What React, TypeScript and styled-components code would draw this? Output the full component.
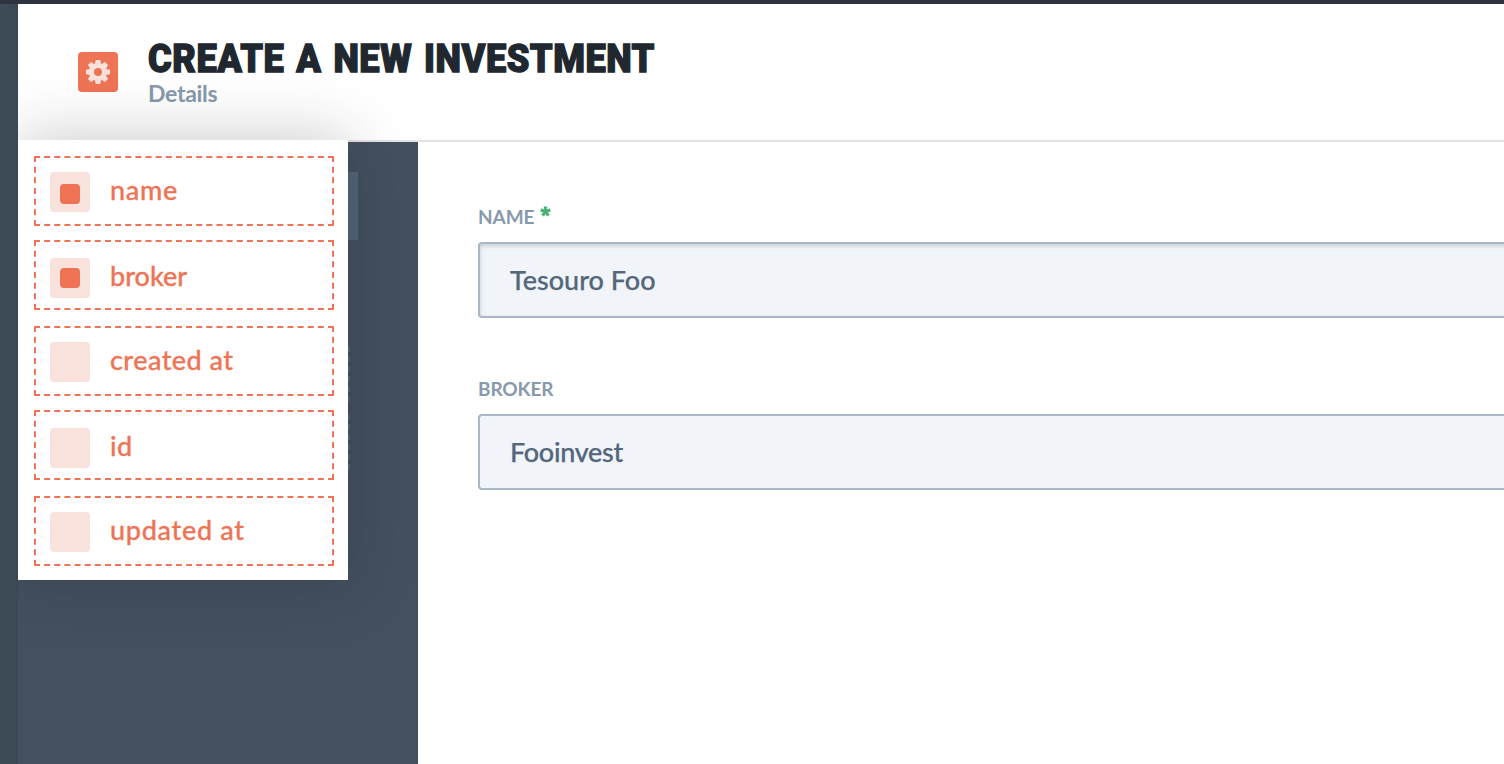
import React from 'react';
import styled, { createGlobalStyle } from 'styled-components';

const Global = createGlobalStyle`
  * { box-sizing: border-box; }
  body { margin: 0; overflow: hidden; font-family: Lato, sans-serif; -webkit-font-smoothing: antialiased; }
`;

const Page = styled.div`
  width: 100%;
  height: 100vh;
  padding: 4px 0 0 18px;
  overflow: hidden;
  background: linear-gradient(90deg, #3d4b59 0, #3d4854 18px);
  box-shadow: inset 0 4px 0 #2d3440;
`;

const Modal = styled.div`
  position: relative;
  height: 100%;
  display: flex;
  flex-direction: column;
  background: #fff;
  overflow: hidden;
`;

const Header = styled.header`
  flex: none;
  height: 138px;
  display: flex;
  align-items: flex-start;
  gap: 30px;
  padding: 36px 60px 0;
  border-bottom: 2px solid #e4e4e4;
`;

const IconTile = styled.div`
  width: 40px;
  height: 40px;
  margin-top: 12px;
  border-radius: 4px;
  background: #ee7455;
  display: flex;
  align-items: center;
  justify-content: center;
`;

const Titles = styled.div`
  display: flex;
  flex-direction: column;
`;

const Title = styled.h1`
  margin: 0;
  height: 38px;
  font: 900 38.5px/38px Roboto, sans-serif;
  letter-spacing: 0.55px;
  word-spacing: 2.6px;
  -webkit-text-stroke: 1.3px #20272f;
  stroke-linejoin: round;
  color: #20272f;
  white-space: nowrap;
  transform: scaleX(0.94);
  transform-origin: left;
`;

const Subtitle = styled.div`
  font-size: 23px;
  font-weight: 700;
  line-height: 31px;
  letter-spacing: -0.3px;
  color: #8799ac;
`;

const Body = styled.div`
  flex: 1;
  display: flex;
  min-height: 0;
`;

const Sidebar = styled.aside`
  flex: none;
  width: 400px;
  padding: 30px 60px 0 60px;
  background: #44505f;
`;

const ActiveItem = styled.div`
  height: 68px;
  background: #536477;
`;

const DropZone = styled.div<{ $top: number }>`
  height: 56px;
  width: 272px;
  margin-top: ${(p) => p.$top}px;
  border: 2px dashed #4f6277;
`;

const Form = styled.main`
  flex: none;
  width: 1200px;
  padding: 60px 0 0 60px;
`;

const Field = styled.div`
  height: 172px;
`;

const Label = styled.label`
  display: flex;
  height: 40px;
  gap: 6px;
  line-height: 29px;
  font-size: 19px;
  font-weight: 700;
  letter-spacing: -0.1px;
  color: #8799ac;
`;

const Star = styled.svg`
  width: 11px;
  height: 11px;
  margin-top: 4px;
`;

const Input = styled.div<{ $focused?: boolean; $tracking: number }>`
  height: 76px;
  padding: 0 30px;
  border: 2px solid #a9b7c6;
  border-radius: 4px;
  background: #f1f5fa;
  box-shadow: ${(p) => (p.$focused ? 'inset 0 2px 4px rgba(80, 97, 115, 0.27)' : 'none')};
  font-size: 27px;
  font-weight: 500;
  line-height: 72px;
  letter-spacing: ${(p) => p.$tracking}px;
  -webkit-text-stroke: 0.25px #53667a;
  color: #53667a;
`;

const Popover = styled.div`
  position: absolute;
  left: 0;
  top: 136px;
  width: 330px;
  height: 440px;
  padding: 16px 14px 0 16px;
  background: #fff;
  box-shadow: 0 0 60px rgba(28, 32, 38, 0.25);
`;

const Option = styled.div<{ $low: boolean }>`
  height: 70px;
  margin-bottom: ${(p) => (p.$low ? 16 : 14)}px;
  padding: ${(p) => (p.$low ? 16 : 14)}px 14px 0;
  border: 2px dashed #ee7455;
  display: flex;
  gap: 20px;
  color: #ee7455;
`;

const Check = styled.span<{ $low: boolean }>`
  width: 40px;
  height: 40px;
  padding: ${(p) => (p.$low ? 10 : 12)}px 10px 0;
  border-radius: 4px;
  background: #fae2dc;
`;

const Dot = styled.span`
  display: block;
  width: 20px;
  height: 20px;
  border-radius: 4px;
  background: #ee7455;
`;

const OptionText = styled.span<{ $tracking: number }>`
  font-size: 27px;
  font-weight: 500;
  line-height: 36px;
  letter-spacing: ${(p) => p.$tracking}px;
  -webkit-text-stroke: 0.3px #ee7455;
`;

const options = [
  { name: 'name', on: true, tracking: 0.7 },
  { name: 'broker', on: true, tracking: 0 },
  { name: 'created at', on: false, tracking: 0.45 },
  { name: 'id', on: false, tracking: 0.5 },
  { name: 'updated at', on: false, tracking: 0.7 },
];

const teeth = [0, 45, 90, 135, 180, 225, 270, 315];

function Gear() {
  return (
    <svg width="24" height="24" viewBox="-12 -12 24 24">
      <g fill="#fae2dc">
        {teeth.map((a) => (
          <path key={a} transform={`rotate(${a})`} d="M-3.3-7L-2.2-12H2.2L3.3-7Z" />
        ))}
      </g>
      <circle r="6.5" fill="none" stroke="#fae2dc" strokeWidth="5" />
    </svg>
  );
}

export default function App() {
  return (
    <Page>
      <Global />
      <Modal>
        <Header>
          <IconTile><Gear /></IconTile>
          <Titles>
            <Title>CREATE A NEW INVESTMENT</Title>
            <Subtitle>Details</Subtitle>
          </Titles>
        </Header>
        <Body>
          <Sidebar>
            <ActiveItem />
            <DropZone $top={106} />
            <DropZone $top={12} />
          </Sidebar>
          <Form>
            <Field>
              <Label>
                NAME
                <Star viewBox="-5.5 -5.5 11 11">
                  {[0, 72, 144, 216, 288].map((a) => (
                    <path key={a} transform={`rotate(${a})`} d="M-1 0L-1.5-4.8H1.5L1 0Z" fill="#46b073" stroke="#46b073" strokeWidth=".4" />
                  ))}
                </Star>
              </Label>
              <Input $focused $tracking={0}>Tesouro Foo</Input>
            </Field>
            <Field>
              <Label>BROKER</Label>
              <Input $tracking={-0.3}>Fooinvest</Input>
            </Field>
          </Form>
        </Body>
        <Popover>
          {options.map((o, i) => (
            <Option key={o.name} $low={i % 2 === 1}>
              <Check $low={i % 2 === 1}>{o.on && <Dot />}</Check>
              <OptionText $tracking={o.tracking}>{o.name}</OptionText>
            </Option>
          ))}
        </Popover>
      </Modal>
    </Page>
  );
}
